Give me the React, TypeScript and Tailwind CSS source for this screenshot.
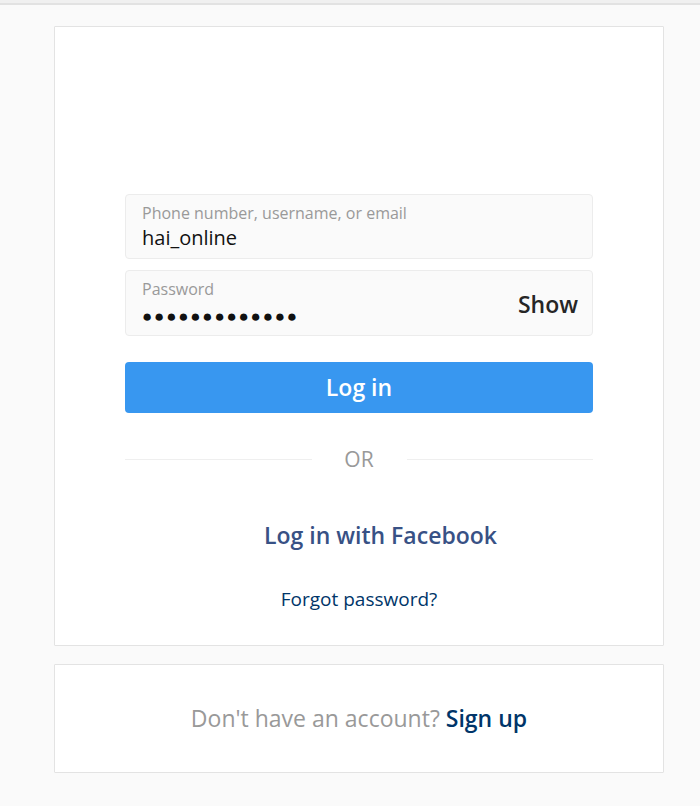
import { useState } from 'react';

export default function App() {
  const [showPassword, setShowPassword] = useState(false);
  const password = 'hai_online123';

  return (
    <div className="min-h-[806px] bg-[#fafafa] font-['Open_Sans',sans-serif]">
      {/* Top rule */}
      <div className="h-[3px] bg-[#f0f0f0]" />
      <div className="h-[2px] bg-[#e2e2e2]" />

      <main className="ml-[54px] w-[610px] pt-[21px] flex flex-col gap-[18px]">
        {/* Login card */}
        <div className="h-[620px] bg-white border border-[#e3e3e3] rounded-[1px] pt-[167px] px-[70px]">
          <form className="flex flex-col" onSubmit={(e) => e.preventDefault()}>
            <div className="h-[65px] bg-[#fafafa] border border-[#ececec] rounded-[4px] px-4 pt-[9px]">
              <div className="text-[16px] leading-[18px] text-[#999]">Phone number, username, or email</div>
              <div className="mt-[2px] text-[20px] leading-[28px] text-[#111]">hai_online</div>
            </div>

            <div className="mt-[11px] h-[66px] bg-[#fafafa] border border-[#ececec] rounded-[4px] pl-4 pr-[14px] pt-[9px] flex items-start justify-between">
              <div>
                <div className="text-[16px] leading-[18px] text-[#999]">Password</div>
                <div className="mt-[3px] text-[17px] leading-[30px] text-[#111] tracking-[1.8px]">
                  {showPassword ? password : '●'.repeat(password.length)}
                </div>
              </div>
              <button
                type="button"
                onClick={() => setShowPassword(!showPassword)}
                className="mt-[9px] text-[23px] leading-[30px] font-semibold text-[#262626]"
              >
                Show
              </button>
            </div>

            <button
              type="submit"
              className="mt-[26px] h-[51px] bg-[#3897f0] rounded-[4px] text-white text-[23px] font-semibold"
            >
              Log in
            </button>
          </form>

          {/* Divider */}
          <div className="mt-[31px] flex items-center">
            <div className="flex-1 h-px bg-[#efefef]" />
            <div className="w-[95px] text-center text-[21px] text-[#999]">OR</div>
            <div className="flex-1 h-px bg-[#efefef]" />
          </div>

          {/* Facebook */}
          <div className="mt-[42px] flex justify-center items-center">
            <span className="inline-block w-[43px] h-4" />
            <span className="text-[23px] font-semibold text-[#385185]">Log in with Facebook</span>
          </div>

          <div className="mt-[33px] text-center text-[19px] font-medium text-[#003569]">Forgot password?</div>
        </div>

        {/* Sign up card */}
        <div className="h-[109px] bg-white border border-[#e3e3e3] rounded-[1px] flex items-center justify-center">
          <p className="text-[23px] text-[#999]">
            Don't have an account? <span className="font-semibold text-[#003569]">Sign up</span>
          </p>
        </div>
      </main>
    </div>
  );
}
